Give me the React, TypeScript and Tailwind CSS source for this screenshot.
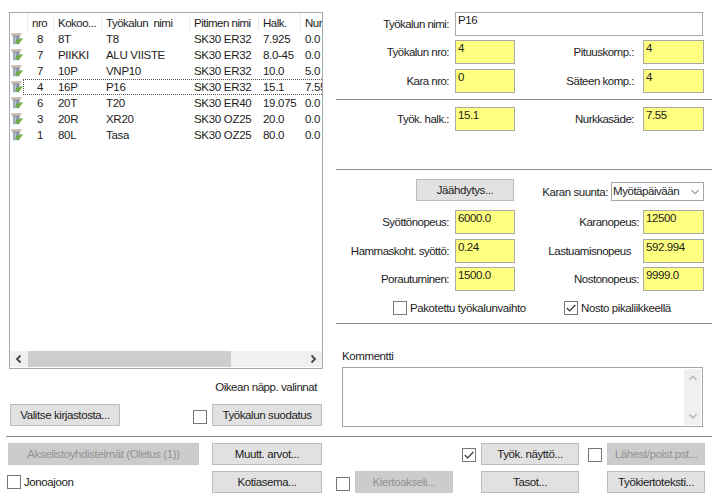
import type { ReactNode } from "react";

const tools = [
  ["8", "8T", "T8", "SK30 ER32", "7.925", "0.0"],
  ["7", "PIIKKI", "ALU VIISTE", "SK30 ER32", "8.0-45", "0.0"],
  ["7", "10P", "VNP10", "SK30 ER32", "10.0", "5.0"],
  ["4", "16P", "P16", "SK30 ER32", "15.1", "7.55"],
  ["6", "20T", "T20", "SK30 ER40", "19.075", "0.0"],
  ["3", "20R", "XR20", "SK30 OZ25", "20.0", "0.0"],
  ["1", "80L", "Tasa", "SK30 OZ25", "80.0", "0.0"],
];

function ToolIcon() {
  return (
    <svg width="12" height="14" viewBox="0 0 12 14" className="mt-px ml-px shrink-0">
      <rect x="0.3" y="1" width="10" height="2.2" fill="#c9c2bb" />
      <rect x="1.5" y="3" width="7.5" height="1.5" fill="#aaa6a4" />
      <rect x="2.2" y="4" width="6.3" height="8.2" fill="#8592a0" />
      <rect x="3.4" y="4.5" width="2" height="7" fill="#b4c0ca" />
      <path d="M5 8.6 L7 10.6 L10.8 6.6" fill="none" stroke="#69b03c" strokeWidth="2.2" />
    </svg>
  );
}

function Chevron({ dir, color }: { dir: "left" | "right" | "up" | "down"; color: string }) {
  const d = {
    left: "M6.5 1.5 L3 5 L6.5 8.5",
    right: "M3.5 1.5 L7 5 L3.5 8.5",
    up: "M1.5 6.7 L5 3.2 L8.5 6.7",
    down: "M1.5 3.3 L5 6.8 L8.5 3.3",
  }[dir];
  return (
    <svg width="10" height="10" viewBox="0 0 10 10">
      <path d={d} fill="none" stroke={color} strokeWidth="1.8" />
    </svg>
  );
}

function Check({ on = false, className = "" }: { on?: boolean; className?: string }) {
  return (
    <span className={`block h-[14px] w-[14px] shrink-0 border border-[#777] bg-white ${className}`}>
      {on && (
        <svg width="12" height="12" viewBox="0 0 12 12">
          <path d="M1.8 6 L4.6 8.8 L10.4 3" fill="none" stroke="#333" strokeWidth="1.2" />
        </svg>
      )}
    </span>
  );
}

function Button({ children, className = "", disabled = false }: { children: ReactNode; className?: string; disabled?: boolean }) {
  return (
    <button
      className={`flex h-[22px] shrink-0 items-center justify-center border pt-px whitespace-nowrap ${
        disabled ? "border-[#c8c8c8] bg-[#cccccc] text-[#929292]" : "border-[#bcbcbc] bg-[#e1e1e1]"
      } ${className}`}
    >
      {children}
    </button>
  );
}

function Field({ value, className = "" }: { value: string; className?: string }) {
  return (
    <div className={`shrink-0 border border-[#a9a9a9] pl-[2px] leading-[15px] ${className}`}>{value}</div>
  );
}

function Pair({ a, av, b, bv, className = "", bw = "w-[119px]" }: { a: string; av: string; b: string; bv: string; className?: string; bw?: string }) {
  return (
    <div className={`flex h-6 ${className}`}>
      <div className="mr-[6px] w-[113px] text-right leading-6 tracking-[-0.52px]">{a}</div>
      <Field value={av} className="w-[60px] bg-[#ffff80]" />
      <div className={`text-right leading-6 tracking-[-0.5px] ${bw}`}>{b}</div>
      <Field value={bv} className="ml-auto w-[61px] bg-[#ffff80]" />
    </div>
  );
}

const cols = "grid grid-cols-[26px_48px_88px_69px_42px_22px]";

export default function App() {
  return (
    <div className="flex h-[498px] w-[727px] flex-col overflow-hidden bg-white font-['Liberation_Sans',Arial,sans-serif] text-[11.5px] tracking-[-0.4px] whitespace-pre text-[#1c1c1c]">
      <div className="flex h-[435px]">
        <section className="ml-[9px] w-[314px] pt-3">
          <div className="flex h-[357px] flex-col border border-[#a5a8b0] tracking-[-0.3px]">
            <div className={`ml-[17px] h-[18px] w-[295px] overflow-hidden leading-[20px] tracking-[-0.5px] ${cols}`}>
              {["nro", "Kokoo...", "Työkalun  nimi", "Pitimen nimi", "Halk.", "Nur"].map((h) => (
                <div key={h} className="border-l border-[#ececec] pl-[4px] whitespace-pre">{h}</div>
              ))}
            </div>
            {tools.map((t, r) => (
              <div key={r} className="flex h-4">
                <ToolIcon />
                <div className={`w-[299px] overflow-hidden leading-[16px] ${cols} border-y border-l ${r === 3 ? "border-dotted border-[#555]" : "border-transparent"}`}>
                  {t.map((v, i) => (
                    <div key={i} className={`-mt-px ${i === 0 ? "pl-[13px]" : "pl-[8px]"}`}>{v}</div>
                  ))}
                </div>
              </div>
            ))}
            <div className="mt-auto mb-px flex h-4 items-center bg-[#f0f0f0]">
              <span className="flex w-[18px] justify-center"><Chevron dir="left" color="#444" /></span>
              <span className="h-4 w-[203px] bg-[#cdcdcd]" />
              <span className="mr-[4px] ml-auto"><Chevron dir="right" color="#444" /></span>
            </div>
          </div>
          <div className="mt-[10px] pr-[6px] text-right leading-4 tracking-[-0.45px]">Oikean näpp. valinnat</div>
          <div className="mt-[9px] flex items-center px-px">
            <Button className="w-[110px]">Valitse kirjastosta...</Button>
            <Check className="mt-[4px] ml-[73px]" />
            <Button className="ml-auto w-[110px]">Työkalun suodatus</Button>
          </div>
        </section>

        <section className="ml-[13px] w-[376px] pt-3">
          <div className="w-[368px]">
            <div className="flex h-6">
              <div className="mr-[6px] w-[113px] text-right leading-6 tracking-[-0.55px]">Työkalun nimi:</div>
              <Field value="P16" className="w-[248px]" />
            </div>
            <Pair className="mt-[4px]" a="Työkalun nro:" av="4" b="Pituuskomp.:" bv="4" />
            <Pair className="mt-[5px]" a="Kara nro:" av="0" b="Säteen komp.:" bv="4" />
          </div>
          <div className="mt-[6px] h-px bg-[#8c8c8c]" />
          <div className="w-[368px]">
            <Pair className="mt-[7px]" a="Työk. halk.:" av="15.1" b="Nurkkasäde:" bv="7.55" />
          </div>
          <div className="mt-[38px] h-px bg-[#8c8c8c]" />
          <div className="w-[368px]">
            <div className="mt-[9px] flex h-[22px] items-center">
              <Button className="ml-[80px] w-[98px]">Jäähdytys...</Button>
              <div className="mt-[5px] w-[94px] text-right tracking-[-0.45px]">Karan suunta:</div>
              <div className="mt-[3px] ml-auto flex h-[19px] w-[93px] items-center justify-between border border-[#a5a5a5] pr-[3px] pl-px tracking-[-0.45px]">
                Myötäpäivään
                <svg width="10" height="10" viewBox="0 0 10 10"><path d="M1.5 3.2 L5 6.7 L8.5 3.2" fill="none" stroke="#555" /></svg>
              </div>
            </div>
            <Pair className="mt-[9px]" a="Syöttönopeus:" av="6000.0" b="Karanopeus:" bv="12500" bw="w-[124px]" />
            <Pair className="mt-[5px]" a="Hammaskoht. syöttö:" av="0.24" b="Lastuamisnopeus" bv="592.994" bw="w-[116px]" />
            <Pair className="mt-[4px]" a="Porautuminen:" av="1500.0" b="Nostonopeus:" bv="9999.0" bw="w-[124px]" />
            <div className="mt-[10px] flex h-[14px] items-center">
              <Check className="ml-[57px]" />
              <span className="mt-px ml-[3px] w-[154px]">Pakotettu työkalunvaihto</span>
              <Check on />
              <span className="mt-px ml-[3px]">Nosto pikaliikkeellä</span>
            </div>
          </div>
          <div className="mt-[8px] h-px bg-[#8c8c8c]" />
          <div className="mt-[24px] ml-[6px] leading-4">Kommentti</div>
          <div className="mt-[3px] ml-[6px] flex h-[60px] w-[361px] justify-end border border-[#a5a5a5] p-px">
            <div className="flex w-[17px] flex-col items-center justify-between bg-[#f0f0f0] py-[4px]">
              <Chevron dir="up" color="#bdbdbd" />
              <Chevron dir="down" color="#bdbdbd" />
            </div>
          </div>
        </section>
      </div>

      <div className="mt-px ml-[6px] h-px w-[706px] bg-[#858585]" />
      <div className="mt-[6px] flex h-[22px] items-center">
        <Button disabled className="ml-[8px] w-[191px] tracking-[-0.4px]">Akselistoyhdistelmät (Oletus (1))</Button>
        <Button className="ml-[13px] w-[110px]">Muutt. arvot...</Button>
        <Check on className="mt-[2px] ml-[140px]" />
        <Button className="ml-[5px] w-[98px]">Työk. näyttö...</Button>
        <Check className="mt-[2px] ml-[9px]" />
        <Button disabled className="ml-[5px] w-[98px]">Lähest/poist.pst...</Button>
      </div>
      <div className="mt-[6px] flex h-[22px] items-center">
        <Check className="ml-[7px]" />
        <span className="mt-px ml-[3px] w-[188px]">Jonoajoon</span>
        <Button className="w-[110px]">Kotiasema...</Button>
        <Check className="mt-[3px] ml-[14px]" />
        <Button disabled className="ml-[5px] w-[98px]">Kiertoakseli...</Button>
        <Button className="ml-[28px] w-[98px]">Tasot...</Button>
        <Button className="ml-[28px] w-[98px]">Työkiertoteksti...</Button>
      </div>
    </div>
  );
}
